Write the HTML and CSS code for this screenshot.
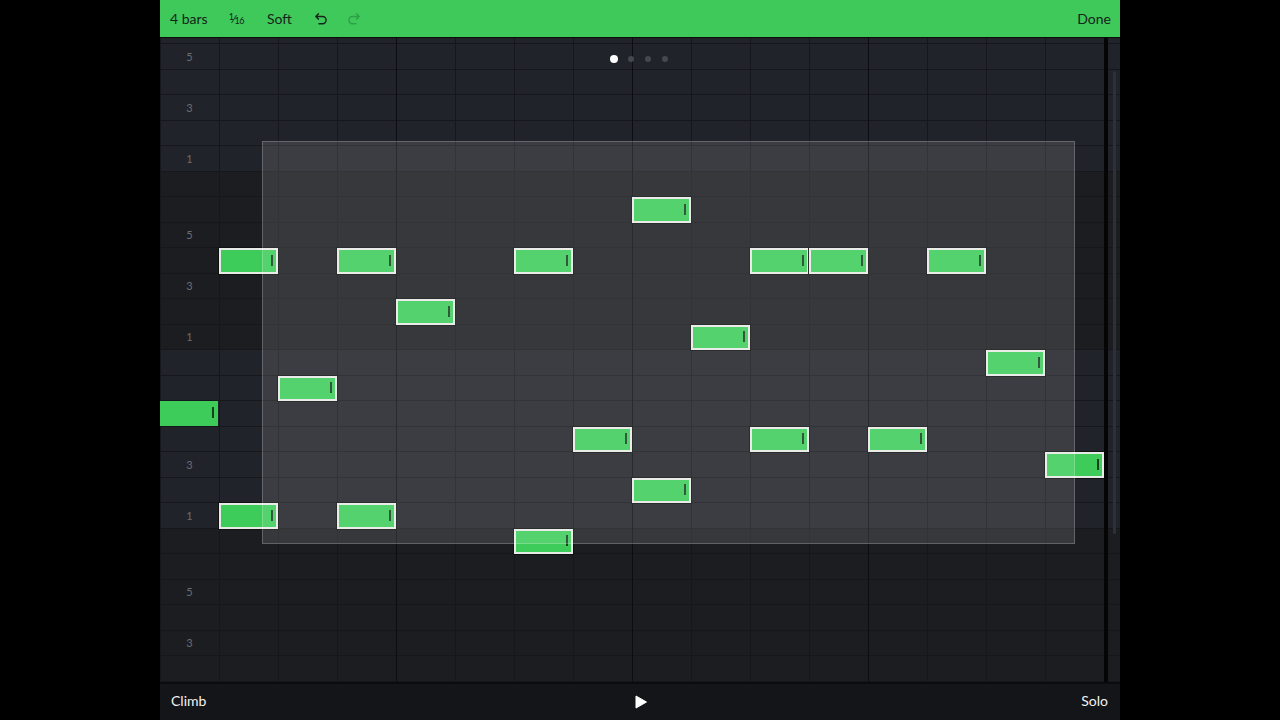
FILE: index.html
```html
<!DOCTYPE html>
<html lang="en">
<head>
    <meta charset="UTF-8">
    <title>Clip Editor</title>
    <link rel="stylesheet" href="styles.css">
</head>
<body>

    <div class="app">
        <header class="toolbar">
            <div class="tools">
                <span class="tool">4 bars</span>
                <span class="tool frac"><sup>1</sup>⁄<sub>16</sub></span>
                <span class="tool soft">Soft</span>
                <button class="icon-btn" aria-label="Undo">
                    <svg width="14" height="14" viewBox="0 0 14 14"><path d="M4.5 1.8 L1.8 4.5 L4.5 7.2 M2 4.5 H8.5 A3.6 3.6 0 0 1 8.5 11.7 H5" fill="none" stroke="currentColor" stroke-width="1.4" stroke-linecap="round" stroke-linejoin="round"/></svg>
                </button>
                <button class="icon-btn disabled" aria-label="Redo">
                    <svg width="14" height="14" viewBox="0 0 14 14"><path d="M9.5 1.8 L12.2 4.5 L9.5 7.2 M12 4.5 H5.5 A3.6 3.6 0 0 0 5.5 11.7 H9" fill="none" stroke="currentColor" stroke-width="1.4" stroke-linecap="round" stroke-linejoin="round"/></svg>
                </button>
            </div>
            <span class="tool">Done</span>
        </header>

        <main class="editor">
            <div class="roll">
                <div class="lanes">
                    <div class="lane"></div>
                    <div class="lane"></div>
                    <div class="lane"></div>
                    <div class="lane"></div>
                    <div class="lane"></div>
                    <div class="lane"></div>
                    <div class="lane dark"></div>
                    <div class="lane dark"></div>
                    <div class="lane dark"></div>
                    <div class="lane dark"></div>
                    <div class="lane dark"></div>
                    <div class="lane dark"></div>
                    <div class="lane dark"></div>
                    <div class="lane"></div>
                    <div class="lane"></div>
                    <div class="lane"></div>
                    <div class="lane"></div>
                    <div class="lane"></div>
                    <div class="lane"></div>
                    <div class="lane"></div>
                    <div class="lane dark"></div>
                    <div class="lane dark"></div>
                    <div class="lane dark"></div>
                    <div class="lane dark"></div>
                    <div class="lane dark"></div>
                    <div class="lane dark"></div>
                    <div class="lane dark"></div>
                </div>

                <div class="cells">
                    <!-- scale degree labels -->
                    <span class="degree" style="grid-row: 2">5</span>
                    <span class="degree" style="grid-row: 4">3</span>
                    <span class="degree" style="grid-row: 6">1</span>
                    <span class="degree" style="grid-row: 9">5</span>
                    <span class="degree" style="grid-row: 11">3</span>
                    <span class="degree" style="grid-row: 13">1</span>
                    <span class="degree" style="grid-row: 16">5</span>
                    <span class="degree" style="grid-row: 18">3</span>
                    <span class="degree" style="grid-row: 20">1</span>
                    <span class="degree" style="grid-row: 23">5</span>
                    <span class="degree" style="grid-row: 25">3</span>

                    <!-- notes -->
                    <div class="note selected" style="grid-area: 8 / 9"></div>
                    <div class="note selected" style="grid-area: 10 / 2"></div>
                    <div class="note selected" style="grid-area: 10 / 4"></div>
                    <div class="note selected" style="grid-area: 10 / 7"></div>
                    <div class="note selected" style="grid-area: 10 / 11"></div>
                    <div class="note selected" style="grid-area: 10 / 12"></div>
                    <div class="note selected" style="grid-area: 10 / 14"></div>
                    <div class="note selected" style="grid-area: 12 / 5"></div>
                    <div class="note selected" style="grid-area: 13 / 10"></div>
                    <div class="note selected" style="grid-area: 14 / 15"></div>
                    <div class="note selected" style="grid-area: 15 / 3"></div>
                    <div class="note" style="grid-area: 16 / 1"></div>
                    <div class="note selected" style="grid-area: 17 / 8"></div>
                    <div class="note selected" style="grid-area: 17 / 11"></div>
                    <div class="note selected" style="grid-area: 17 / 13"></div>
                    <div class="note selected" style="grid-area: 18 / 16"></div>
                    <div class="note selected" style="grid-area: 19 / 9"></div>
                    <div class="note selected" style="grid-area: 20 / 2"></div>
                    <div class="note selected" style="grid-area: 20 / 4"></div>
                    <div class="note selected" style="grid-area: 21 / 7"></div>
                </div>

                <div class="selection"></div>

                <div class="pager">
                    <span class="dot active"></span>
                    <span class="dot"></span>
                    <span class="dot"></span>
                    <span class="dot"></span>
                </div>

                <div class="end-line"></div>
                <div class="scroll-thumb"></div>
            </div>
        </main>

        <footer class="transport">
            <span class="label">Climb</span>
            <button class="play" aria-label="Play">
                <svg width="12" height="14" viewBox="0 0 12 14"><path d="M1 1 L11.5 7 L1 13 Z" fill="#ffffff" stroke="#ffffff" stroke-width="1" stroke-linejoin="round"/></svg>
            </button>
            <span class="label">Solo</span>
        </footer>
    </div>

</body>
</html>
```

FILE: styles.css
```css
/* Reset */
* {
    margin: 0;
    padding: 0;
    box-sizing: border-box;
}

body {
    background-color: #000000;
    font-family: 'Lato', 'Inter', sans-serif;
    height: 720px;
    overflow: hidden;
}

.app {
    width: 960px;
    height: 720px;
    margin: 0 auto;
    display: flex;
    flex-direction: column;
}

/* Top toolbar */
.toolbar {
    height: 38px;
    background-color: #3ec95a;
    border-bottom: 1px solid #0b0d0b;
    display: flex;
    align-items: center;
    justify-content: space-between;
    padding: 0 9px 0 10px;
    color: #16241a;
}

.tools {
    display: flex;
    align-items: center;
    gap: 21px;
}

.tool {
    font-size: 14px;
    line-height: 1;
}

.soft {
    margin-left: 2px;
    margin-right: 1px;
}

.frac {
    font-size: 12px;
    letter-spacing: -0.5px;
}

.frac sup {
    font-size: 9px;
    vertical-align: 3px;
}

.frac sub {
    font-size: 9px;
    vertical-align: -1px;
}

.icon-btn {
    background: none;
    border: none;
    color: #16241a;
    display: flex;
    width: 14px;
    height: 14px;
}

.icon-btn.disabled {
    color: #2f9f46;
    margin-left: -2px;
}

/* Piano roll */
.editor {
    height: 644px;
    overflow: hidden;
}

.roll {
    position: relative;
    width: 960px;
    height: 644px;
    overflow: hidden;
}

.lanes {
    display: flex;
    flex-direction: column;
    margin-top: -19.5px;
}

.lane {
    height: 25.5px;
    flex-shrink: 0;
    background-color: #202329;
    border-bottom: 1px solid #15171b;
}

.lane.dark {
    background-color: #1b1d21;
}

.cells {
    position: absolute;
    top: -19.5px;
    left: 0;
    width: 1003px;
    display: grid;
    grid-template-columns: repeat(17, 59px);
    grid-template-rows: repeat(27, 25.5px);
    background-image:
        repeating-linear-gradient(to right, transparent 0, transparent 235px, #0c0d10 235px, #0c0d10 236px),
        repeating-linear-gradient(to right, transparent 0, transparent 58px, #15171b 58px, #15171b 59px);
    background-position: 1px 0, 1px 0;
}

.degree {
    grid-column: 1;
    align-self: center;
    justify-self: center;
    font-size: 11px;
    color: #6a6d73;
    margin-top: -1px;
}

.note {
    background-color: #3dcc5a;
    margin: 0 1px 1px 0;
    position: relative;
}

.note::after {
    content: '';
    position: absolute;
    right: 4px;
    top: 50%;
    width: 2px;
    height: 11px;
    margin-top: -6px;
    background-color: #17401f;
}

.note.selected {
    margin: 0;
    border: 2px solid #e7eae7;
    box-shadow: 0 0 0 1px #0f1110;
    z-index: 1;
}

.note.selected::after {
    right: 3px;
}

.selection {
    position: absolute;
    top: 103px;
    left: 102px;
    width: 813px;
    height: 403px;
    background-color: rgba(255, 255, 255, 0.12);
    border: 1px solid rgba(255, 255, 255, 0.22);
    z-index: 2;
}

.pager {
    position: absolute;
    top: 17px;
    left: 0;
    right: 0;
    display: flex;
    justify-content: center;
    align-items: center;
    gap: 11px;
    padding-right: 2px;
    z-index: 3;
}

.dot {
    width: 6px;
    height: 6px;
    border-radius: 50%;
    background-color: #45484e;
}

.dot.active {
    width: 8px;
    height: 8px;
    background-color: #ffffff;
    margin-right: -1px;
}

.end-line {
    position: absolute;
    top: 0;
    bottom: 0;
    left: 944px;
    width: 4px;
    background-color: #050506;
    z-index: 3;
}

.scroll-thumb {
    position: absolute;
    top: 33px;
    left: 953px;
    width: 3px;
    height: 463px;
    border-radius: 2px;
    background-color: #2d3036;
    z-index: 3;
}

/* Bottom transport */
.transport {
    height: 38px;
    background-color: #141518;
    border-top: 2px solid #0a0b0d;
    display: flex;
    align-items: center;
    justify-content: space-between;
    padding: 0 12px 3px 11px;
    color: #f2f2f2;
}

.label {
    font-size: 14px;
    width: 60px;
}

.label:last-child {
    text-align: right;
}

.play {
    background: none;
    border: none;
    display: flex;
    margin-left: 2px;
    margin-top: 3px;
}
```
